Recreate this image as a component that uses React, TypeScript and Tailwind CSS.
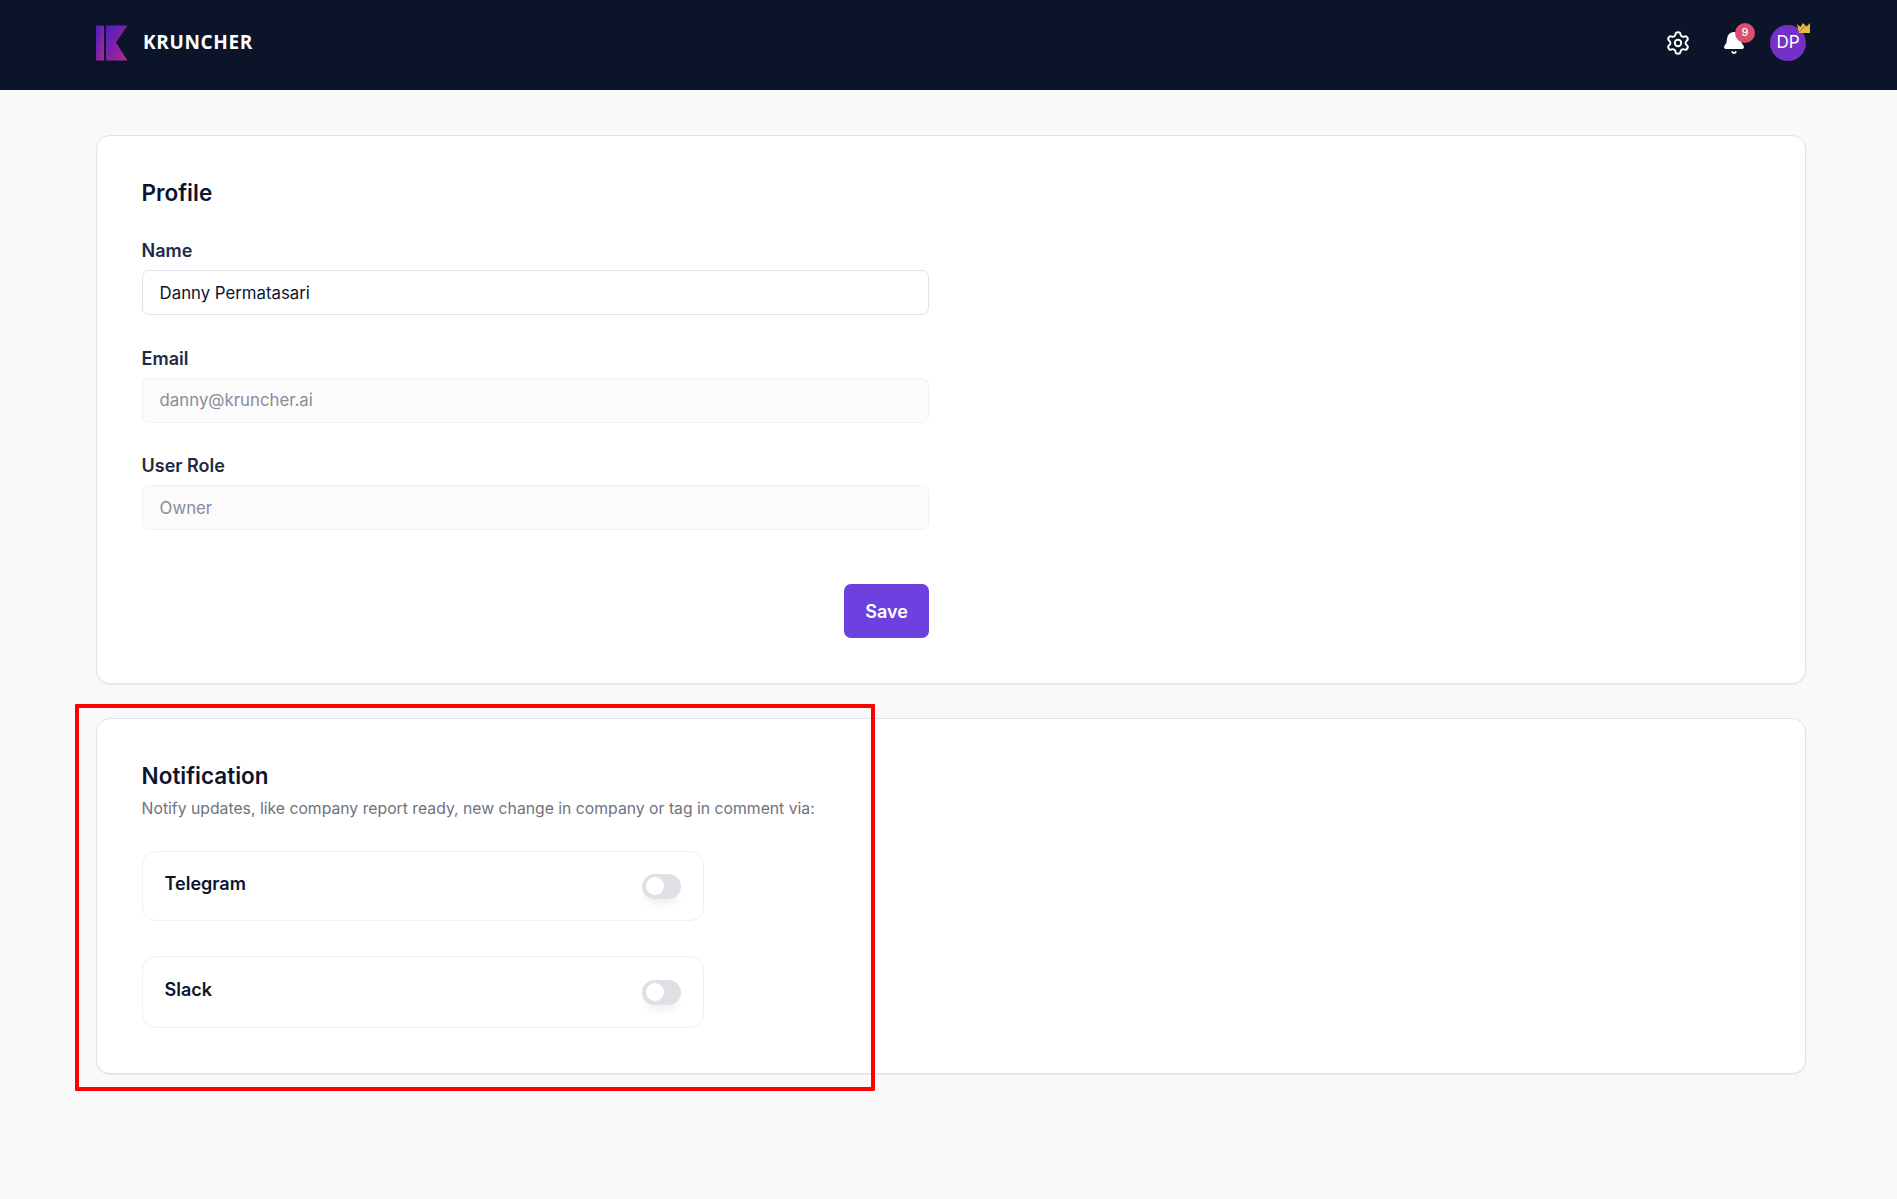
import React from 'react';
import { Settings, Bell } from 'lucide-react';

const Logo = () => (
  <svg width="32" height="36" viewBox="0 0 32 36" className="shrink-0">
    <defs>
      <linearGradient id="k-grad" x1="0" y1="0" x2="1" y2="1">
        <stop offset="0%" stopColor="#4c1dc0" />
        <stop offset="100%" stopColor="#b0288c" />
      </linearGradient>
    </defs>
    <rect x="0" y="0.5" width="8" height="35" rx="0.5" fill="url(#k-grad)" />
    <path d="M10 0.5H31.5L20 17.5L31.5 35.5H10Z" fill="url(#k-grad)" />
  </svg>
);

const Crown = () => (
  <svg width="13" height="10" viewBox="0 0 13 10">
    <path d="M0 1L3.5 4L6 0L9.5 3.5L13 0V10H2Z" fill="#e9b93c" />
    <path d="M2.5 9L8.5 2" stroke="#7a6a2c" strokeWidth="0.8" />
  </svg>
);

const Field = ({ label, value, disabled }: { label: string; value: string; disabled?: boolean }) => (
  <div className="flex flex-col">
    <label className="text-[18px] leading-[24px] font-semibold text-[#1e2a44] mb-[7px]">{label}</label>
    <input
      readOnly
      value={value}
      className={`h-[45px] w-full rounded-[7px] border px-[17px] text-[16.8px] outline-none ${
        disabled
          ? 'bg-[#fbfbfc] border-[#f1f1f3] text-[#8a8c99]'
          : 'bg-white border-[#e2e2e8] text-[#0b1530]'
      }`}
    />
  </div>
);

const ToggleRow = ({ label, height }: { label: string; height: string }) => (
  <div className={`flex items-center justify-between w-[562px] rounded-[14px] border border-[#f0f0f3] pl-[22px] pr-[22px] ${height}`}>
    <span className="text-[18px] font-semibold text-[#0b1530] -mt-[5px]">{label}</span>
    <div className="flex items-center w-[39px] h-[25px] rounded-full bg-[#dfe0e6] pl-[4px] shadow-[0_8px_10px_-4px_rgba(0,0,0,0.08)]">
      <div className="w-[18px] h-[18px] rounded-full bg-white" />
    </div>
  </div>
);

export default function App() {
  return (
    <div className="relative min-h-[1199px] bg-[#f9f9f9] font-['Inter',sans-serif]">
      <header className="flex items-center justify-between h-[90px] bg-[#0b1428] pl-[96px] pr-[91px]">
        <div className="flex items-center gap-[15px] -mt-[5px]">
          <Logo />
          <span className="font-['Open_Sans',sans-serif] text-[19px] font-bold tracking-[0.65px] text-white">KRUNCHER</span>
        </div>
        <div className="flex items-center -mt-[5px]">
          <Settings size={26} className="text-white" strokeWidth={1.8} />
          <div className="relative ml-[31px] mr-[24px]">
            <Bell size={24} className="text-white" fill="white" />
            <span className="absolute -top-[8px] left-[13px] flex items-center justify-center w-[20px] h-[20px] rounded-full bg-[#d9506f] text-[11px] font-medium text-white">9</span>
          </div>
          <div className="relative flex items-center justify-center w-[36px] h-[36px] rounded-full bg-[#7431c8] text-[17px] text-white">
            DP
            <span className="absolute -top-[2px] -right-[4px] flex">
              <Crown />
            </span>
          </div>
        </div>
      </header>

      <main className="flex flex-col gap-[34px] pt-[45px] pl-[96px] pr-[91px]">
        <section className="h-[549px] rounded-[14px] border border-[#e2e2ea] bg-white pl-[44.6px] pr-[45px] pb-[45px] pt-[40px] shadow-[0_1px_1px_rgba(0,0,0,0.06)]">
          <h2 className="text-[22.5px] leading-[34px] font-semibold text-[#0b1530] mb-[29px]">Profile</h2>
          <div className="flex flex-col gap-[31.5px] w-[787.4px]">
            <Field label="Name" value="Danny Permatasari" />
            <Field label="Email" value="danny@kruncher.ai" disabled />
            <Field label="User Role" value="Owner" disabled />
            <div className="flex justify-end mt-[22.5px]">
              <button className="w-[85px] h-[54px] rounded-[7px] bg-[#6c41e0] text-[18px] font-semibold text-white">Save</button>
            </div>
          </div>
        </section>

        <section className="h-[356px] rounded-[14px] border border-[#e2e2ea] bg-white pl-[44.6px] pr-[45px] pt-[40px] shadow-[0_1px_1px_rgba(0,0,0,0.06)]">
          <h2 className="text-[22.5px] leading-[34px] font-semibold text-[#0b1530]">Notification</h2>
          <p className="text-[15.75px] leading-[24px] text-[#6f7280] mt-[4px]">Notify updates, like company report ready, new change in company or tag in comment via:</p>
          <div className="flex flex-col gap-[35px] mt-[30px]">
            <ToggleRow label="Telegram" height="h-[70px]" />
            <ToggleRow label="Slack" height="h-[72px]" />
          </div>
        </section>
      </main>

      {/* annotation frame drawn over the page */}
      <div className="absolute left-[75px] top-[704px] w-[800px] h-[387px] border-[4px] border-[#fe0000] rounded-[1px] pointer-events-none" />
    </div>
  );
}
